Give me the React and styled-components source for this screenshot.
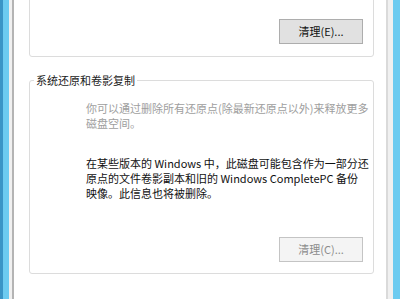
import React from "react";
import styled, { createGlobalStyle } from "styled-components";

const Global = createGlobalStyle`
  html, body {
    margin: 0;
    padding: 0;
    background: #ffffff;
    overflow: hidden;
  }
`;

// outer blue window frame
const Window = styled.div`
  display: flex;
  width: 400px;
  height: 299px;
  box-sizing: border-box;
  background: #6ccbf0;
  border-left: 3px solid #3a95c6;
  padding: 0 7px 0 6px;
`;

const DialogBody = styled.div`
  flex: 1;
  display: flex;
  background: #f0f0f0;
  padding: 0 5px 0 3px;
`;

const TabPage = styled.div`
  flex: 1;
  background: #ffffff;
  border-left: 2px solid #b4b4b4;
  border-right: 2px solid #dadada;
  padding: 0 12px 0 15px;
  overflow: hidden;
  font-family: "Noto Sans CJK SC", "Noto Sans", sans-serif;
  font-size: 11px;
  color: #000;
`;

const GroupBox = styled.fieldset`
  margin: ${(p) => p.$top || "0"} 0 0 0;
  padding: ${(p) => p.$pad || "0"};
  border: 1px solid #dcdcdc;
  border-radius: 3px;
  display: flex;
  flex-direction: column;
`;

const Legend = styled.legend`
  padding: 0 2px;
  margin-left: 4px;
  line-height: 15px;
  color: #1a1a1a;
`;

const ButtonRow = styled.div`
  display: flex;
  justify-content: flex-end;
  padding-right: 10px;
  margin-top: ${(p) => p.$mt || "0"};
`;

const Button = styled.button`
  width: 84px;
  height: 25px;
  box-sizing: border-box;
  background: ${(p) => (p.disabled ? "#f4f4f4" : "#e1e1e1")};
  border: 1px solid ${(p) => (p.disabled ? "#c4c4c4" : "#adadad")};
  border-radius: 0;
  font-family: "Noto Sans CJK SC", "Noto Sans", sans-serif;
  font-size: 11px;
  color: ${(p) => (p.disabled ? "#8c8c8c" : "#111")};
  padding: 0;
  line-height: 23px;
`;

const Para = styled.p`
  margin: ${(p) => p.$mt || "0"} 0 0 56px;
  line-height: 15px;
  white-space: nowrap;
  color: ${(p) => (p.$muted ? "#9e9e9e" : "#111")};
`;

export default function App() {
  return (
    <>
      <Global />
      <Window>
        <DialogBody>
          <TabPage>
            <GroupBox $top="-10px" $pad="28px 0 12px 0">
              <ButtonRow>
                <Button>清理(E)...</Button>
              </ButtonRow>
            </GroupBox>
            <GroupBox $top="16px" $pad="0 0 11px 0">
              <Legend>系统还原和卷影复制</Legend>
              <Para $muted $mt="13px">
                你可以通过删除所有还原点(除最新还原点以外)来释放更多
                <br />
                磁盘空间。
              </Para>
              <Para $mt="25px">
                在某些版本的 Windows 中，此磁盘可能包含作为一部分还
                <br />
                原点的文件卷影副本和旧的 Windows CompletePC 备份
                <br />
                映像。此信息也将被删除。
              </Para>
              <ButtonRow $mt="36px">
                <Button disabled>清理(C)...</Button>
              </ButtonRow>
            </GroupBox>
          </TabPage>
        </DialogBody>
      </Window>
    </>
  );
}
